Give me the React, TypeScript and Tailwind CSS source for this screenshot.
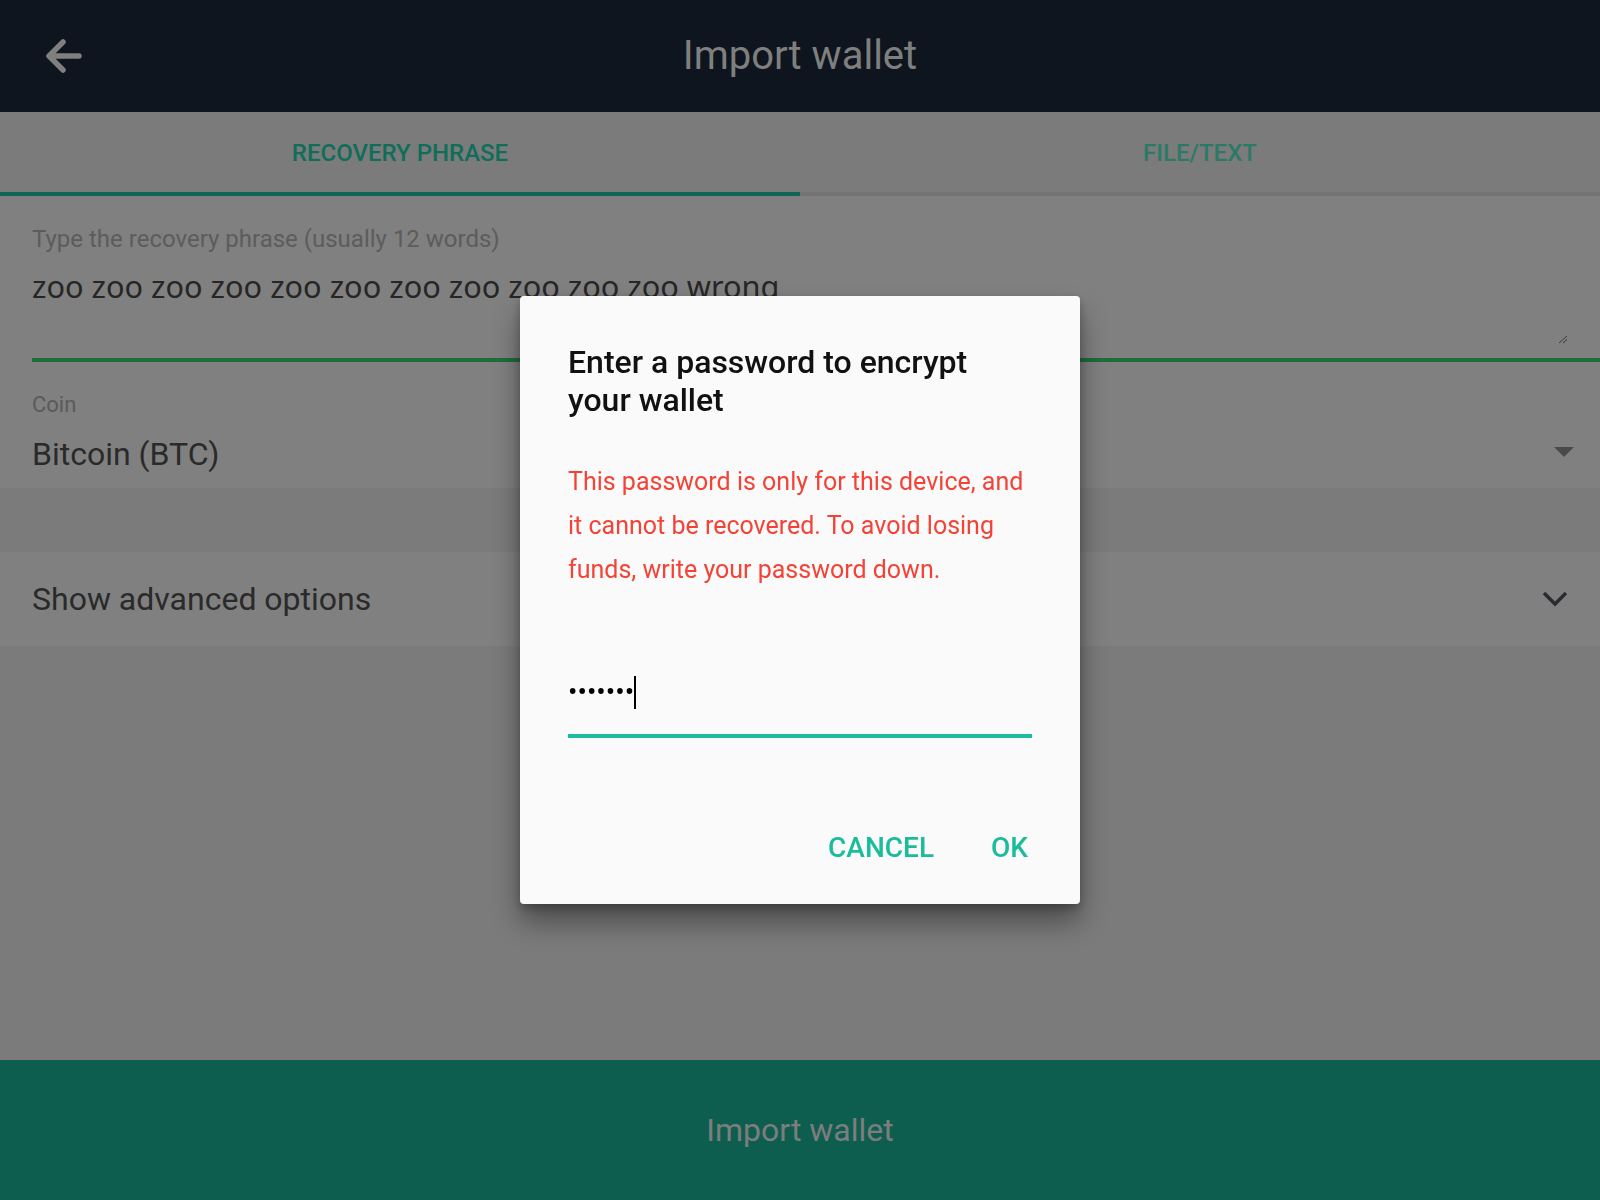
import React from "react";

/**
 * Import wallet screen with the "encrypt password" dialog open on top.
 * Background colours are taken as seen through the dim overlay.
 */

function BackArrow() {
  return (
    <svg width="44" height="40" viewBox="0 0 44 40" fill="none">
      <path
        d="M7 20 H37 M7 20 L21 6 M7 20 L21 34"
        stroke="#7f7f7f"
        strokeWidth="5.5"
        strokeLinecap="round"
        strokeLinejoin="round"
      />
    </svg>
  );
}

function Chevron() {
  return (
    <svg width="26" height="16" viewBox="0 0 26 16" fill="none">
      <path d="M2 2 L13 13 L24 2" stroke="#2a2a31" strokeWidth="3.4" />
    </svg>
  );
}

function PasswordDialog() {
  return (
    <div className="fixed inset-0 flex items-center justify-center">
      <div className="w-[560px] h-[608px] bg-[#fafafa] rounded-[4px] shadow-[0_18px_28px_rgba(0,0,0,0.38),0_4px_10px_rgba(0,0,0,0.25)] flex flex-col px-12 pt-[47px]">
        <h2 className="text-[32px] leading-[38px] font-medium text-[#111] pr-4">
          Enter a password to encrypt your wallet
        </h2>
        <p className="mt-[41px] text-[25px] leading-[44px] text-[#f44336]">
          This password is only for this device, and it cannot be recovered. To
          avoid losing funds, write your password down.
        </p>
        <div className="mt-[80px] border-b-4 border-[#1abc9c] pb-[22px]">
          <div className="h-10 flex items-center">
            <span className="text-[28px] leading-none text-black">
              •••••••
            </span>
            <span className="w-[2px] h-[33px] bg-black" />
          </div>
        </div>
        <div className="mt-[92px] flex justify-end gap-[57px] pr-1">
          <button className="text-[28px] leading-9 font-medium text-[#1abc9c]">
            CANCEL
          </button>
          <button className="text-[28px] leading-9 font-medium text-[#1abc9c]">
            OK
          </button>
        </div>
      </div>
    </div>
  );
}

export default function App() {
  return (
    <div className="relative w-full h-[1200px] flex flex-col bg-[#7b7b7b] font-['Roboto',sans-serif]">
      {/* Header */}
      <header className="h-[112px] bg-[#0e151e] grid grid-cols-[1fr_auto_1fr] items-center">
        <div className="pl-[42px]">
          <BackArrow />
        </div>
        <h1 className="text-[40px] text-[#7f7f7f]">Import wallet</h1>
        <div />
      </header>

      {/* Tabs */}
      <nav className="h-[84px] flex bg-[#7b7b7b]">
        <div className="flex-1 flex items-center justify-center pt-[2px] border-b-4 border-[#0f6655] text-[24px] font-medium text-[#0f6e5a]">
          RECOVERY PHRASE
        </div>
        <div className="flex-1 flex items-center justify-center pt-[2px] border-b-4 border-[#747474] text-[24px] font-medium text-[#2b7a67]">
          FILE/TEXT
        </div>
      </nav>

      {/* Recovery phrase */}
      <section className="bg-[#808080] pl-8 pt-[29px]">
        <label className="block text-[24px] leading-7 text-[#5c5c5c]">
          Type the recovery phrase (usually 12 words)
        </label>
        <div className="relative mt-[13px] h-[96px] border-b-4 border-[#1e6e3a] font-['Noto_Sans',sans-serif] text-[30.7px] leading-10 text-[#262626]">
          zoo zoo zoo zoo zoo zoo zoo zoo zoo zoo zoo wrong
          <svg
            className="absolute right-[32px] bottom-[14px]"
            width="10"
            height="9"
            viewBox="0 0 10 9"
          >
            <path d="M1 8 L9 1 M5 8 L9 4.5" stroke="#3a3a3a" strokeWidth="1" />
          </svg>
        </div>
      </section>

      {/* Coin */}
      <section className="bg-[#808080] pl-8 pr-[26px] pt-[30px] pb-[14px]">
        <div className="text-[22px] leading-[26px] text-[#5a5a5a]">Coin</div>
        <div className="mt-4 flex items-center justify-between">
          <span className="text-[32px] leading-10 text-[#2a2a2a]">
            Bitcoin (BTC)
          </span>
          <svg className="-mt-1" width="20" height="10" viewBox="0 0 20 10">
            <path d="M0 0 H20 L10 10 Z" fill="#4a4a4a" />
          </svg>
        </div>
      </section>

      <div className="h-16 bg-[#7b7b7b]" />

      {/* Advanced options */}
      <section className="h-[94px] bg-[#808080] pl-8 pr-8 flex items-center justify-between">
        <span className="text-[32px] leading-10 text-[#2a2a2a]">
          Show advanced options
        </span>
        <Chevron />
      </section>

      <div className="flex-1 bg-[#7b7b7b]" />

      {/* Bottom action */}
      <footer className="h-[140px] bg-[#0e5e50] flex items-center justify-center">
        <span className="text-[32px] text-[#7d7d7d]">Import wallet</span>
      </footer>

      <PasswordDialog />
    </div>
  );
}
